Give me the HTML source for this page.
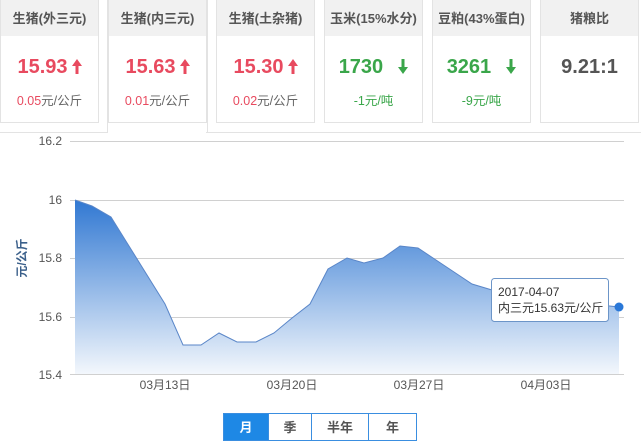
<!DOCTYPE html><html><head><meta charset="utf-8"><style>
body{margin:0;width:641px;height:442px;background:#fff;position:relative;overflow:hidden;font-family:"Liberation Sans","Noto Sans CJK SC",sans-serif}
.c{position:absolute;top:0;width:97px;height:122px;border:1px solid #e3e3e3;border-top:none;background:#fff}
.h{height:36px;background:#f1f1f1;text-align:center;line-height:38px;font-size:13px;font-weight:bold;color:#555}
.v{text-align:center;font-size:20px;font-weight:bold;margin-top:20px;height:26px}
.v svg{vertical-align:-1px;margin-left:4px}
.s{text-align:center;font-size:12.5px;color:#666;margin-top:8px}
.r{color:#e84a5f}.g{color:#3aa64a}
.btn{position:absolute;top:413px;height:28px;border:1px solid #3a8ee0;line-height:28px;text-align:center;font-size:13px;font-weight:bold;color:#555;box-sizing:border-box}
</style></head><body>
<div style="position:absolute;left:107px;top:0;width:99px;height:133px;border:1px solid #e3e3e3;border-top:none;border-bottom:none"></div>
<div class="c" style="left:0"><div class="h">生猪(外三元)</div><div class="v r">15.93<svg width="10" height="15" viewBox="0 0 10 15"><path d="M5,0 L10,7 L6.5,7 L6.5,15 L3.5,15 L3.5,7 L0,7 Z" fill="#e84a5f"/></svg></div><div class="s"><span class="r">0.05</span>元/公斤</div></div>
<div class="c" style="left:108px"><div class="h">生猪(内三元)</div><div class="v r">15.63<svg width="10" height="15" viewBox="0 0 10 15"><path d="M5,0 L10,7 L6.5,7 L6.5,15 L3.5,15 L3.5,7 L0,7 Z" fill="#e84a5f"/></svg></div><div class="s"><span class="r">0.01</span>元/公斤</div></div>
<div class="c" style="left:216px"><div class="h">生猪(土杂猪)</div><div class="v r">15.30<svg width="10" height="15" viewBox="0 0 10 15"><path d="M5,0 L10,7 L6.5,7 L6.5,15 L3.5,15 L3.5,7 L0,7 Z" fill="#e84a5f"/></svg></div><div class="s"><span class="r">0.02</span>元/公斤</div></div>
<div class="c" style="left:324px"><div class="h">玉米(15%水分)</div><div class="v g">1730 &nbsp;<svg width="10" height="15" viewBox="0 0 10 15"><path d="M5,15 L10,8 L6.5,8 L6.5,0 L3.5,0 L3.5,8 L0,8 Z" fill="#3aa64a"/></svg></div><div class="s g">-1元/吨</div></div>
<div class="c" style="left:432px"><div class="h">豆粕(43%蛋白)</div><div class="v g">3261 &nbsp;<svg width="10" height="15" viewBox="0 0 10 15"><path d="M5,15 L10,8 L6.5,8 L6.5,0 L3.5,0 L3.5,8 L0,8 Z" fill="#3aa64a"/></svg></div><div class="s g">-9元/吨</div></div>
<div class="c" style="left:540px"><div class="h">猪粮比</div><div class="v" style="color:#555">9.21:1</div></div>
<svg style="position:absolute;left:0;top:0" width="641" height="442">
<defs><linearGradient id="a" x1="0" y1="200" x2="0" y2="374" gradientUnits="userSpaceOnUse"><stop offset="0" stop-color="#3178d2"/><stop offset="1" stop-color="#f3f7fc"/></linearGradient></defs>
<line x1="0" y1="132.5" x2="107" y2="132.5" stroke="#e3e3e3"/><line x1="206" y1="132.5" x2="641" y2="132.5" stroke="#e3e3e3"/>
<g stroke="#d0d0d0" stroke-width="1"><line x1="70" y1="141.5" x2="624" y2="141.5"/><line x1="70" y1="200.5" x2="624" y2="200.5"/><line x1="70" y1="258.5" x2="624" y2="258.5"/><line x1="70" y1="317.5" x2="624" y2="317.5"/><line x1="70" y1="374.5" x2="624" y2="374.5"/></g>
<path d="M75,200 L92,206 L111,217 L165,304 L183,345 L201,345 L219,333 L237,342 L256,342 L274,333 L292,318 L310,304 L328,269 L347,258 L364,263 L383,258 L400,246 L418,248 L436,260 L454,272 L472,284 L492,290 L520,296 L560,300 L600,305 L619,307 L619,374 L75,374 Z" fill="url(#a)" stroke="none"/>
<path d="M75,200 L92,206 L111,217 L165,304 L183,345 L201,345 L219,333 L237,342 L256,342 L274,333 L292,318 L310,304 L328,269 L347,258 L364,263 L383,258 L400,246 L418,248 L436,260 L454,272 L472,284 L492,290 L520,296 L560,300 L600,305 L619,307" fill="none" stroke="#5a86c8" stroke-width="1"/>
<circle cx="619" cy="307" r="4.5" fill="#2a78d8"/>
<g font-size="12" fill="#555" text-anchor="end"><text x="62" y="145">16.2</text><text x="62" y="204">16</text><text x="62" y="262">15.8</text><text x="62" y="321">15.6</text><text x="62" y="379">15.4</text></g>
<text transform="translate(26,258) rotate(-90)" font-size="12" font-weight="bold" fill="#3a5f8a" text-anchor="middle">元/公斤</text>
<g font-size="12" fill="#555" text-anchor="middle"><text x="165" y="389">03月13日</text><text x="292" y="389">03月20日</text><text x="419" y="389">03月27日</text><text x="546" y="389">04月03日</text></g>
<rect x="491.5" y="278.5" width="117" height="43" rx="3" fill="#fff" stroke="#6c95c8"/>
<text x="498" y="296" font-size="12" fill="#333">2017-04-07</text>
<text x="498" y="312" font-size="12" fill="#333">内三元15.63元/公斤</text>
</svg>
<div class="btn" style="left:223px;width:46px;background:#1e88e5;color:#fff">月</div>
<div class="btn" style="left:268px;width:44px;background:#fff">季</div>
<div class="btn" style="left:311px;width:58px;background:#fff">半年</div>
<div class="btn" style="left:368px;width:49px;background:#fff">年</div>
</body></html>
